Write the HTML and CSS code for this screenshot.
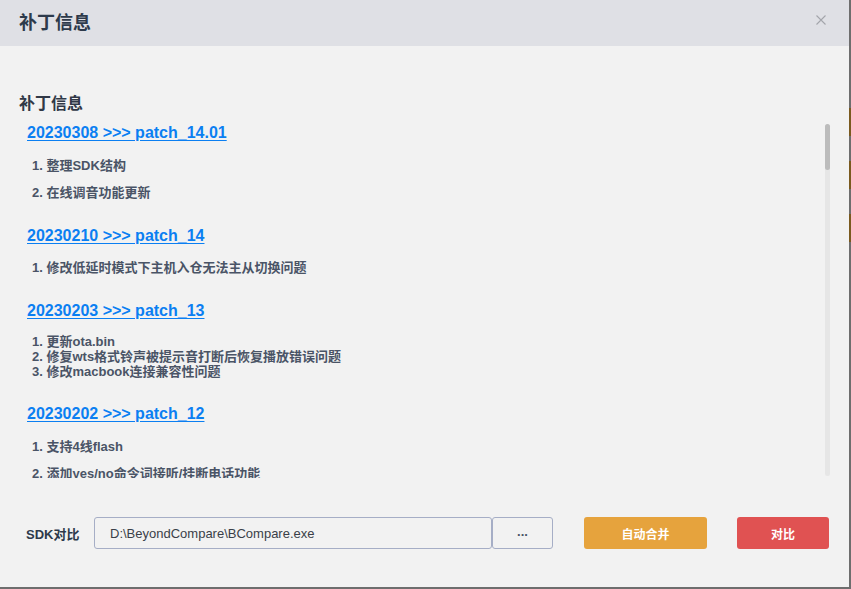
FILE: index.html
```html
<!DOCTYPE html>
<html lang="zh-CN">
<head>
<meta charset="utf-8">
<title>补丁信息</title>
<link rel="stylesheet" href="styles.css">
</head>
<body>
<div class="page">
  <div class="dialog">
    <header class="dlg-head">
      <h2 class="dlg-title">补丁信息</h2>
      <button class="close" aria-label="关闭">
        <svg width="10" height="10" viewBox="0 0 10 10"><path d="M0.5 0.5 L9.5 9.5 M9.5 0.5 L0.5 9.5" stroke="#a3a5ab" stroke-width="1.1" fill="none"/></svg>
      </button>
    </header>
    <main class="dlg-body">
      <h3 class="sec-title">补丁信息</h3>
      <div class="scroll-row">
        <div class="notes">
          <section class="patch patch-wide">
            <a class="patch-link" href="#">20230308 &gt;&gt;&gt; patch_14.01</a>
            <div class="items spaced">
              <p>1. 整理SDK结构</p>
              <p>2. 在线调音功能更新</p>
            </div>
          </section>
          <section class="patch patch-wide">
            <a class="patch-link" href="#">20230210 &gt;&gt;&gt; patch_14</a>
            <div class="items tight">
              <p>1. 修改低延时模式下主机入仓无法主从切换问题</p>
            </div>
          </section>
          <section class="patch">
            <a class="patch-link" href="#">20230203 &gt;&gt;&gt; patch_13</a>
            <div class="items tighter">
              <p>1. 更新ota.bin<br>2. 修复wts格式铃声被提示音打断后恢复播放错误问题<br>3. 修改macbook连接兼容性问题</p>
            </div>
          </section>
          <section class="patch">
            <a class="patch-link" href="#">20230202 &gt;&gt;&gt; patch_12</a>
            <div class="items spaced">
              <p>1. 支持4线flash</p>
              <p>2. 添加yes/no命令词接听/挂断电话功能</p>
            </div>
          </section>
        </div>
        <div class="vscroll"><div class="thumb"></div></div>
      </div>
      <div class="tool-row">
        <label class="tool-label">SDK对比</label>
        <div class="path-input">D:\BeyondCompare\BCompare.exe</div>
        <button class="btn-browse">...</button>
        <button class="btn btn-merge">自动合并</button>
        <button class="btn btn-compare">对比</button>
      </div>
    </main>
  </div>
  <div class="backdrop-strip"><span></span><span></span><span></span></div>
</div>
</body>
</html>
```

FILE: styles.css
```css
html, body {
  margin: 0;
  padding: 0;
}
body {
  width: 851px;
  height: 589px;
  overflow: hidden;
  background: #6e6e6e;
  font-family: "Liberation Sans", "Noto Sans CJK SC", sans-serif;
}
.page {
  display: flex;
  align-items: flex-start;
}
.dialog {
  width: 849px;
  height: 587px;
  background: #f2f2f2;
  display: flex;
  flex-direction: column;
}
.dlg-head {
  height: 46px;
  flex: none;
  background: #dfe0e5;
  display: flex;
  justify-content: space-between;
  align-items: flex-start;
  padding: 0 23px 0 19px;
  box-sizing: border-box;
}
.dlg-title {
  margin: 12px 0 0;
  font-size: 18px;
  line-height: 22px;
  font-weight: bold;
  color: #2d3a4b;
}
.close {
  margin-top: 15px;
  padding: 0;
  border: 0;
  background: none;
  width: 10px;
  height: 10px;
  display: block;
}
.close svg { display: block; }

.dlg-body {
  padding: 0 19px;
  display: flex;
  flex-direction: column;
}
.sec-title {
  margin: 46px 0 2px;
  font-size: 16px;
  line-height: 24px;
  font-weight: bold;
  color: #303846;
}
.scroll-row {
  height: 360px;
  display: flex;
}
.notes {
  flex: 1;
  overflow: hidden;
  padding-top: 5px;
}
.patch {
  margin-bottom: 25px;
}
.patch.patch-wide {
  margin-bottom: 26px;
}
.patch-link {
  display: block;
  padding-left: 8px;
  font-size: 16px;
  line-height: 20px;
  font-weight: bold;
  color: #0b7ff2;
  text-decoration: underline;
  text-underline-offset: 2px;
}
.items {
  margin-top: 15px;
  padding-left: 13px;
  display: flex;
  flex-direction: column;
}
.items.tight {
  margin-top: 14px;
}
.items.tighter {
  margin-top: 13px;
}
.items.spaced {
  gap: 12px;
}
.items p {
  margin: 0;
  font-size: 13px;
  line-height: 15px;
  font-weight: bold;
  color: #4a5466;
  white-space: nowrap;
}
.vscroll {
  width: 5px;
  height: 352px;
  margin-top: 6px;
  background: #e6e6e6;
  border-radius: 3px;
  flex: none;
}
.thumb {
  height: 46px;
  background: #bcbcbc;
  border-radius: 3px;
}

.tool-row {
  margin-top: 39px;
  height: 32px;
  display: flex;
  align-items: stretch;
  padding-left: 7px;
}
.tool-label {
  width: 68px;
  font-size: 13px;
  font-weight: bold;
  color: #2d3a4b;
  display: flex;
  align-items: center;
}
.path-input {
  width: 398px;
  box-sizing: border-box;
  border: 1px solid #a6aec6;
  border-radius: 3px;
  padding-left: 15px;
  font-size: 13px;
  color: #3a3f48;
  display: flex;
  align-items: center;
}
.btn-browse {
  width: 61px;
  box-sizing: border-box;
  border: 1px solid #a6aec6;
  border-radius: 3px;
  background: #f2f2f2;
  font-family: inherit;
  font-size: 13px;
  font-weight: bold;
  color: #4a5466;
  padding: 0 0 4px;
  margin-right: 31px;
}
.btn {
  border: 0;
  border-radius: 3px;
  font-family: inherit;
  font-size: 12px;
  font-weight: bold;
  color: #ffffff;
  padding: 0;
}
.btn-merge {
  width: 123px;
  background: #e6a33d;
  margin-right: 30px;
}
.btn-compare {
  width: 92px;
  background: #e05252;
}

.backdrop-strip {
  width: 2px;
  padding-top: 108px;
  display: flex;
  flex-direction: column;
  gap: 25px;
}
.backdrop-strip span {
  display: block;
  height: 28px;
  background: #7a5a1f;
}
```
